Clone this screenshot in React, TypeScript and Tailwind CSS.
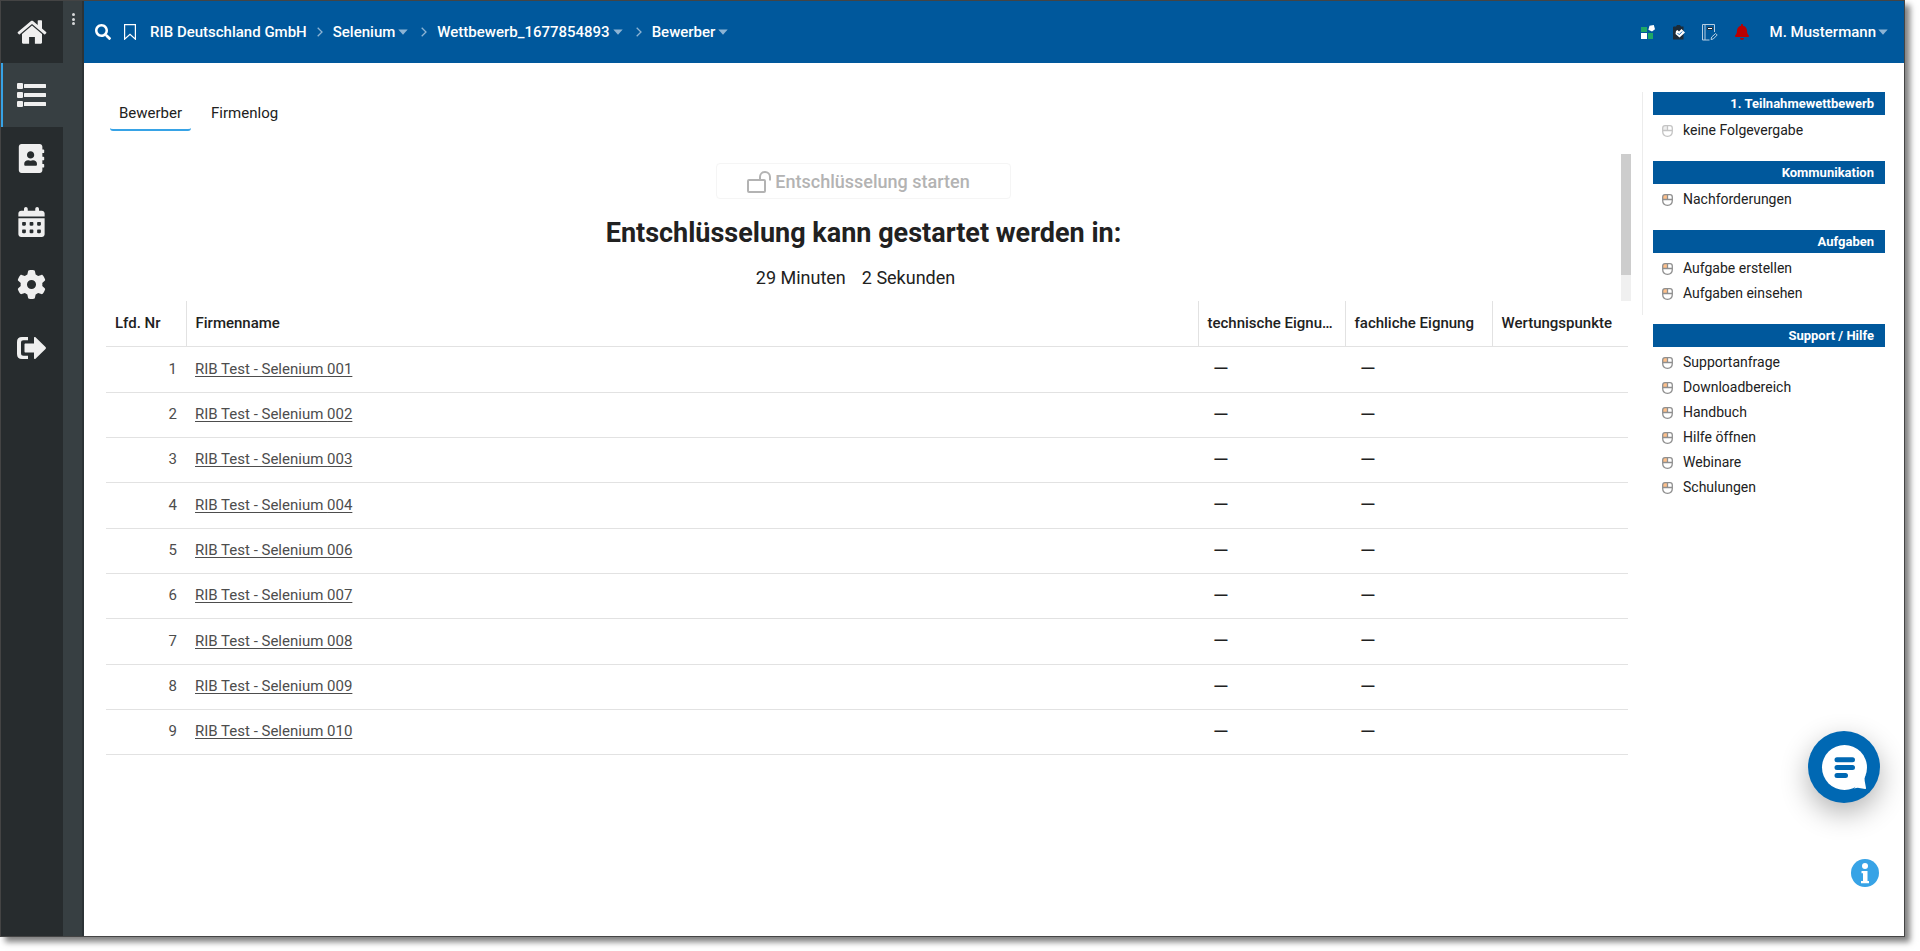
import { useState } from "react";
import { FaAddressBook, FaBell, FaSearch } from "react-icons/fa";
import { FaCalendarDays, FaGear } from "react-icons/fa6";

interface LinkSection {
  title: string;
  links: { label: string; disabled?: boolean }[];
}

const TABS = ["Bewerber", "Firmenlog"];

const CRUMBS = [
  { label: "RIB Deutschland GmbH", menu: false },
  { label: "Selenium", menu: true },
  { label: "Wettbewerb_1677854893", menu: true },
  { label: "Bewerber", menu: true },
];

const BIDDERS = ["001", "002", "003", "004", "006", "007", "008", "009", "010"];

const PROCESS_SECTIONS: LinkSection[] = [
  { title: "1. Teilnahmewettbewerb", links: [{ label: "keine Folgevergabe", disabled: true }] },
  { title: "Kommunikation", links: [{ label: "Nachforderungen" }] },
  { title: "Aufgaben", links: [{ label: "Aufgabe erstellen" }, { label: "Aufgaben einsehen" }] },
];

const SUPPORT_SECTION: LinkSection = {
  title: "Support / Hilfe",
  links: [
    { label: "Supportanfrage" },
    { label: "Downloadbereich" },
    { label: "Handbuch" },
    { label: "Hilfe öffnen" },
    { label: "Webinare" },
    { label: "Schulungen" },
  ],
};

function HomeIcon() {
  return (
    <svg viewBox="0 0 30 25" className="h-[25px] w-[30px]" fill="currentColor">
      <path d="M15 5.6 5 14v8.6c0 .7.4 1.1 1.1 1.1h6v-6.8h5.8v6.8h6c.7 0 1.1-.4 1.1-1.1V14z" />
      <path d="M14 1.1.9 12c-.4.4-.4.8-.1 1.2l.8.9c.3.4.8.4 1.2.1L15 4l12.200 10.200c.4.3.9.3 1.200-.1l.8-.9c.3-.4.3-.8-.1-1.200L25 8.500V.9c0-.4-.3-.7-.7-.7h-2.900c-.4 0-.7.3-.7.7V4.900L16 1.100c-.6-.5-1.400-.5-2 0z" />
    </svg>
  );
}

function ListIcon() {
  return (
    <svg viewBox="0 0 29 24" className="h-6 w-[29px]" fill="currentColor">
      {[0, 9, 18].map((y) => (
        <g key={y}>
          <rect x="0" y={y} width="6" height="6" rx="1" />
          <rect x="7" y={y + 1} width="22" height="4" rx=".5" />
        </g>
      ))}
    </svg>
  );
}

function LogoutIcon() {
  return (
    <svg viewBox="0 0 29 22" className="h-[22px] w-[29px]" fill="currentColor">
      <path d="M11 0v3.200H6.500C4.800 3.200 4 4 4 5.700v10.600c0 1.700.8 2.500 2.500 2.500H11V22H5c-3.300 0-5-1.700-5-5V5c0-3.300 1.700-5 5-5z" />
      <path d="M17 .8c0-.8.9-1.100 1.500-.5l10 9.800c.6.5.6 1.300 0 1.800l-10 9.800c-.6.6-1.500.3-1.500-.5V15.500H8.500c-.6 0-1-.4-1-1v-7c0-.6.4-1 1-1H17z" />
    </svg>
  );
}

function Caret() {
  return (
    <svg viewBox="0 0 10 6" className="h-[6px] w-[10px] text-[#8db4d4]" fill="currentColor">
      <path d="M.3.5h9.400L5 5.800z" />
    </svg>
  );
}

function MouseIcon({ disabled }: { disabled?: boolean }) {
  return (
    <svg viewBox="0 0 11 12" className="h-3 w-[11px]" fill="none">
      <path d="M1 5V2.500Q1 .8 2.700 .6H5.500V5z" fill={disabled ? "#eee" : "#ffc08a"} />
      <path
        d="M.7 3Q.7.7 3 .7h5Q10.300.7 10.300 3v3.500Q10.300 11.300 5.500 11.300T.7 6.500zM.6 5.500h9.800M5.500.6v4.900"
        stroke={disabled ? "#c4c4c4" : "#8f8f8f"}
        strokeWidth="1.300"
      />
    </svg>
  );
}

const NAV_ITEMS = [
  { label: "Projekte", icon: <ListIcon />, active: true },
  { label: "Adressbuch", icon: <FaAddressBook className="h-[29px] w-[27px]" /> },
  { label: "Kalender", icon: <FaCalendarDays className="h-[30px] w-[27px]" /> },
  { label: "Einstellungen", icon: <FaGear className="h-[29px] w-[29px]" /> },
  { label: "Abmelden", icon: <LogoutIcon /> },
];

function SideNav() {
  return (
    <nav className="flex shrink-0">
      <div className="flex w-[62px] flex-col bg-[#272c2e] text-[#efefef]">
        <a href="#" aria-label="Startseite" className="flex h-[62px] items-center justify-center">
          <HomeIcon />
        </a>
        {NAV_ITEMS.map((item) => (
          <a
            key={item.label}
            href="#"
            aria-label={item.label}
            className={
              item.active
                ? "flex h-16 items-center justify-center border-l-2 border-[#37a3e6] bg-[#373f42] pr-1"
                : "flex h-[63px] items-center justify-center pr-0.5"
            }
          >
            {item.icon}
          </a>
        ))}
      </div>
      <div className="flex w-[21px] justify-center border-r-2 border-[#2c3336] bg-[#373f42] pt-3 pl-0.5">
        <button type="button" aria-label="Menü" className="flex h-3 flex-col justify-between">
          <span className="h-[3px] w-[3px] rounded-full bg-[#d7d9da]" />
          <span className="h-[3px] w-[3px] rounded-full bg-[#d7d9da]" />
          <span className="h-[3px] w-[3px] rounded-full bg-[#d7d9da]" />
        </button>
      </div>
    </nav>
  );
}

function Header() {
  return (
    <header className="flex h-[62px] items-center justify-between bg-[#00589c] pr-4 pl-[11px] text-[15px] font-medium text-white">
      <div className="flex items-center">
        <button type="button" aria-label="Suche">
          <FaSearch className="h-4 w-4" />
        </button>
        <button type="button" aria-label="Lesezeichen" className="mr-[14px] ml-[13px]">
          <svg viewBox="0 0 12 16" className="h-4 w-3" fill="none" stroke="currentColor">
            <path d="M.6.6h10.800v14.600L6 10.400.6 15.200z" strokeWidth="1.200" />
          </svg>
        </button>
        {CRUMBS.map((crumb, idx) => (
          <div key={crumb.label} className="flex items-center">
            {idx > 0 && (
              <svg viewBox="0 0 6 10" className="mx-[10px] h-[10px] w-[6px]" fill="none" stroke="#8db4d4" strokeWidth="1.300">
                <path d="M.7.7 5 5 .7 9.300" />
              </svg>
            )}
            <a href="#" className={crumb.menu ? "flex items-center gap-[3px] pr-[3px]" : "flex items-center"}>
              {crumb.label}
              {crumb.menu && <Caret />}
            </a>
          </div>
        ))}
      </div>
      <div className="flex items-center">
        <button type="button" aria-label="Apps">
          <svg viewBox="0 0 14 14" className="h-[14px] w-[14px]">
            <path d="M0 2h6v5H0zM7 8h5v6H7z" fill="#1fa866" />
            <path d="M0 8h6v6H0zM8.500.8l4.300-.8 1.200 4.300-3 2.200-3.600-1.800z" fill="#fff" />
          </svg>
        </button>
        <button type="button" aria-label="Aufgaben" className="ml-[18px]">
          <svg viewBox="0 0 12 15" className="h-[15px] w-3">
            <path d="M1 1.500h2L4 0h3l1 1.500h2.500V14.500H0V2.500q0-1 1-1z" fill="#1d2b38" />
            <path d="m3 6 1.500-1 1.500 1.500L8.500 4 12 7.500 6.500 12.500 2.500 9z" fill="#fff" />
            <path d="m4.500 8 1.700 1.700 3-3.200" fill="none" stroke="#1a6cb5" />
          </svg>
        </button>
        <button type="button" aria-label="Notizen" className="ml-[17px]">
          <svg viewBox="0 0 16 17" className="h-[17px] w-4" fill="none" stroke="#b5cde1">
            <path d="M12.500 8V.5H.5v15.500h7M3 .5V16" />
            <path d="M5.500 3.500h5v2h-5z" stroke="#1d2b38" fill="#fff" />
            <path d="m9 15.500.7-2.500 4-3.500 1.500 1.500-4 4z" />
          </svg>
        </button>
        <button type="button" aria-label="Benachrichtigungen" className="ml-[17px] text-[#b90000]">
          <FaBell className="h-4 w-[14px]" />
        </button>
        <button type="button" className="ml-[21px] flex items-center gap-0.5">
          M. Mustermann
          <Caret />
        </button>
      </div>
    </header>
  );
}

function DecryptionPanel() {
  return (
    <div className="flex h-[147px]">
      <div className="flex flex-1 flex-col items-center pt-[9px]">
        <button
          type="button"
          disabled
          className="flex h-9 w-[295px] items-center justify-center gap-1 rounded border border-[#f5f5f5] pr-[10px] text-[18px] font-medium text-[#b3b3b3]"
        >
          <svg viewBox="0 0 24 24" className="h-6 w-6" fill="none" stroke="currentColor" strokeWidth="2">
            <rect x="1" y="11" width="17" height="12" rx="1" />
            <path d="M13 11V8a5 5 0 0 1 10 0v3.500" />
          </svg>
          Entschlüsselung starten
        </button>
        <h1 className="mt-[17px] text-[27px] leading-[34px] font-bold text-[#212121]">
          Entschlüsselung kann gestartet werden in:
        </h1>
        <p className="mt-4 flex gap-4 pr-4 text-[18px] leading-6">
          <span>29 Minuten</span>
          <span>2 Sekunden</span>
        </p>
      </div>
      <div className="w-[10px] bg-[#f0f0f0]">
        <div className="h-[121px] bg-[#cdcdcd]" />
      </div>
    </div>
  );
}

function BidderTable() {
  return (
    <div className="pr-[3px]">
      <table className="w-full table-fixed border-collapse text-left text-[15px]">
        <colgroup>
          <col className="w-20" />
          <col />
          <col className="w-[147px]" />
          <col className="w-[147px]" />
          <col className="w-[136px]" />
        </colgroup>
        <thead>
          <tr className="h-[45px] border-b border-[#e2e2e2] [&>th]:truncate [&>th]:px-[9px] [&>th]:font-medium [&>th+th]:border-l [&>th+th]:border-[#e2e2e2]">
            <th scope="col">Lfd. Nr</th>
            <th scope="col">Firmenname</th>
            <th scope="col">technische Eignung</th>
            <th scope="col">fachliche Eignung</th>
            <th scope="col">Wertungspunkte</th>
          </tr>
        </thead>
        <tbody>
          {BIDDERS.map((bidder, idx) => (
            <tr key={bidder} className="h-[45px] border-b border-[#e2e2e2] [&:nth-child(3n+1)]:h-[46px]">
              <td className="px-[9px] text-right text-[#4d4d4d]">{idx + 1}</td>
              <td className="px-[9px]">
                <a href="#" className="text-[#4d4d4d] underline underline-offset-2">
                  RIB Test - Selenium {bidder}
                </a>
              </td>
              <td className="px-[15px] text-[20px]">—</td>
              <td className="px-[15px] text-[20px]">—</td>
              <td />
            </tr>
          ))}
        </tbody>
      </table>
    </div>
  );
}

function Section({ section }: { section: LinkSection }) {
  return (
    <section>
      <h2 className="h-[23px] bg-[#00589c] pr-[11px] text-right text-[13px] leading-[23px] font-bold text-white">
        {section.title}
      </h2>
      <ul className="mt-[3px] pl-[9px] text-[14px] leading-[25px]">
        {section.links.map((link) => (
          <li key={link.label}>
            <a href="#" className="flex items-center gap-[10px]">
              <MouseIcon disabled={link.disabled} />
              {link.label}
            </a>
          </li>
        ))}
      </ul>
    </section>
  );
}

export default function App() {
  const [tab, setTab] = useState(TABS[0]);

  return (
    <div className="flex min-h-screen bg-white pr-[15px] pb-[14px] font-['Roboto',sans-serif] text-[#212121]">
      <div className="relative flex flex-1 border border-[#444] bg-white shadow-[5px_5px_6px_rgba(0,0,0,0.5)]">
        <SideNav />
        <div className="flex min-w-0 flex-1 flex-col">
          <Header />
          <div className="flex flex-1 pr-[19px] pl-[22px]">
            <main className="min-w-0 flex-1 pt-8">
              <div role="tablist" className="mb-[23px] flex gap-[11px] pl-1">
                {TABS.map((name) => (
                  <button
                    key={name}
                    type="button"
                    role="tab"
                    aria-selected={tab === name}
                    onClick={() => setTab(name)}
                    className={
                      tab === name
                        ? "h-9 rounded-[3px] border-b-2 border-[#37a3e6] px-[9px] pt-0.5 text-[15px]"
                        : "h-9 rounded-[3px] border-b-2 border-transparent px-[9px] pt-0.5 text-[15px]"
                    }
                  >
                    {name}
                  </button>
                ))}
              </div>
              <DecryptionPanel />
              <BidderTable />
            </main>
            <aside className="ml-[11px] w-[243px] shrink-0 pt-[29px]">
              <div className="mb-[9px] flex flex-col gap-[18px] border-l border-[#ececec] pb-[9px] pl-[10px]">
                {PROCESS_SECTIONS.map((section) => (
                  <Section key={section.title} section={section} />
                ))}
              </div>
              <div className="pl-[11px]">
                <Section section={SUPPORT_SECTION} />
              </div>
            </aside>
          </div>
        </div>

        <button
          type="button"
          aria-label="Chat"
          className="absolute right-6 bottom-[133px] h-[72px] w-[72px] rounded-full bg-[#0068b3] shadow-[0_10px_28px_rgba(0,0,0,0.3)]"
        >
          <svg viewBox="0 0 72 72" className="h-full w-full">
            <circle cx="36.500" cy="36.500" r="22.500" fill="#fff" />
            <path d="M57.500 44q-1.500 3-.8 6l1.300 7q.2 1-.8.900l-6.200-1q-2-.3-5 .6z" fill="#fff" />
            <path d="M29 28.700h15.500M29 36.600h15.500M29 44.400h8.500" stroke="#0068b3" strokeWidth="5" strokeLinecap="round" />
          </svg>
        </button>
        <button type="button" aria-label="Info" className="absolute right-[25px] bottom-[49px] h-7 w-7 rounded-full bg-[#37a3e6]">
          <svg viewBox="0 0 28 28" className="h-full w-full" fill="#fff">
            <circle cx="14" cy="7" r="3" />
            <path d="M10.500 12H16.500v10H18v2.300h-8V22h2v-7.700h-1.500z" />
          </svg>
        </button>
      </div>
    </div>
  );
}
